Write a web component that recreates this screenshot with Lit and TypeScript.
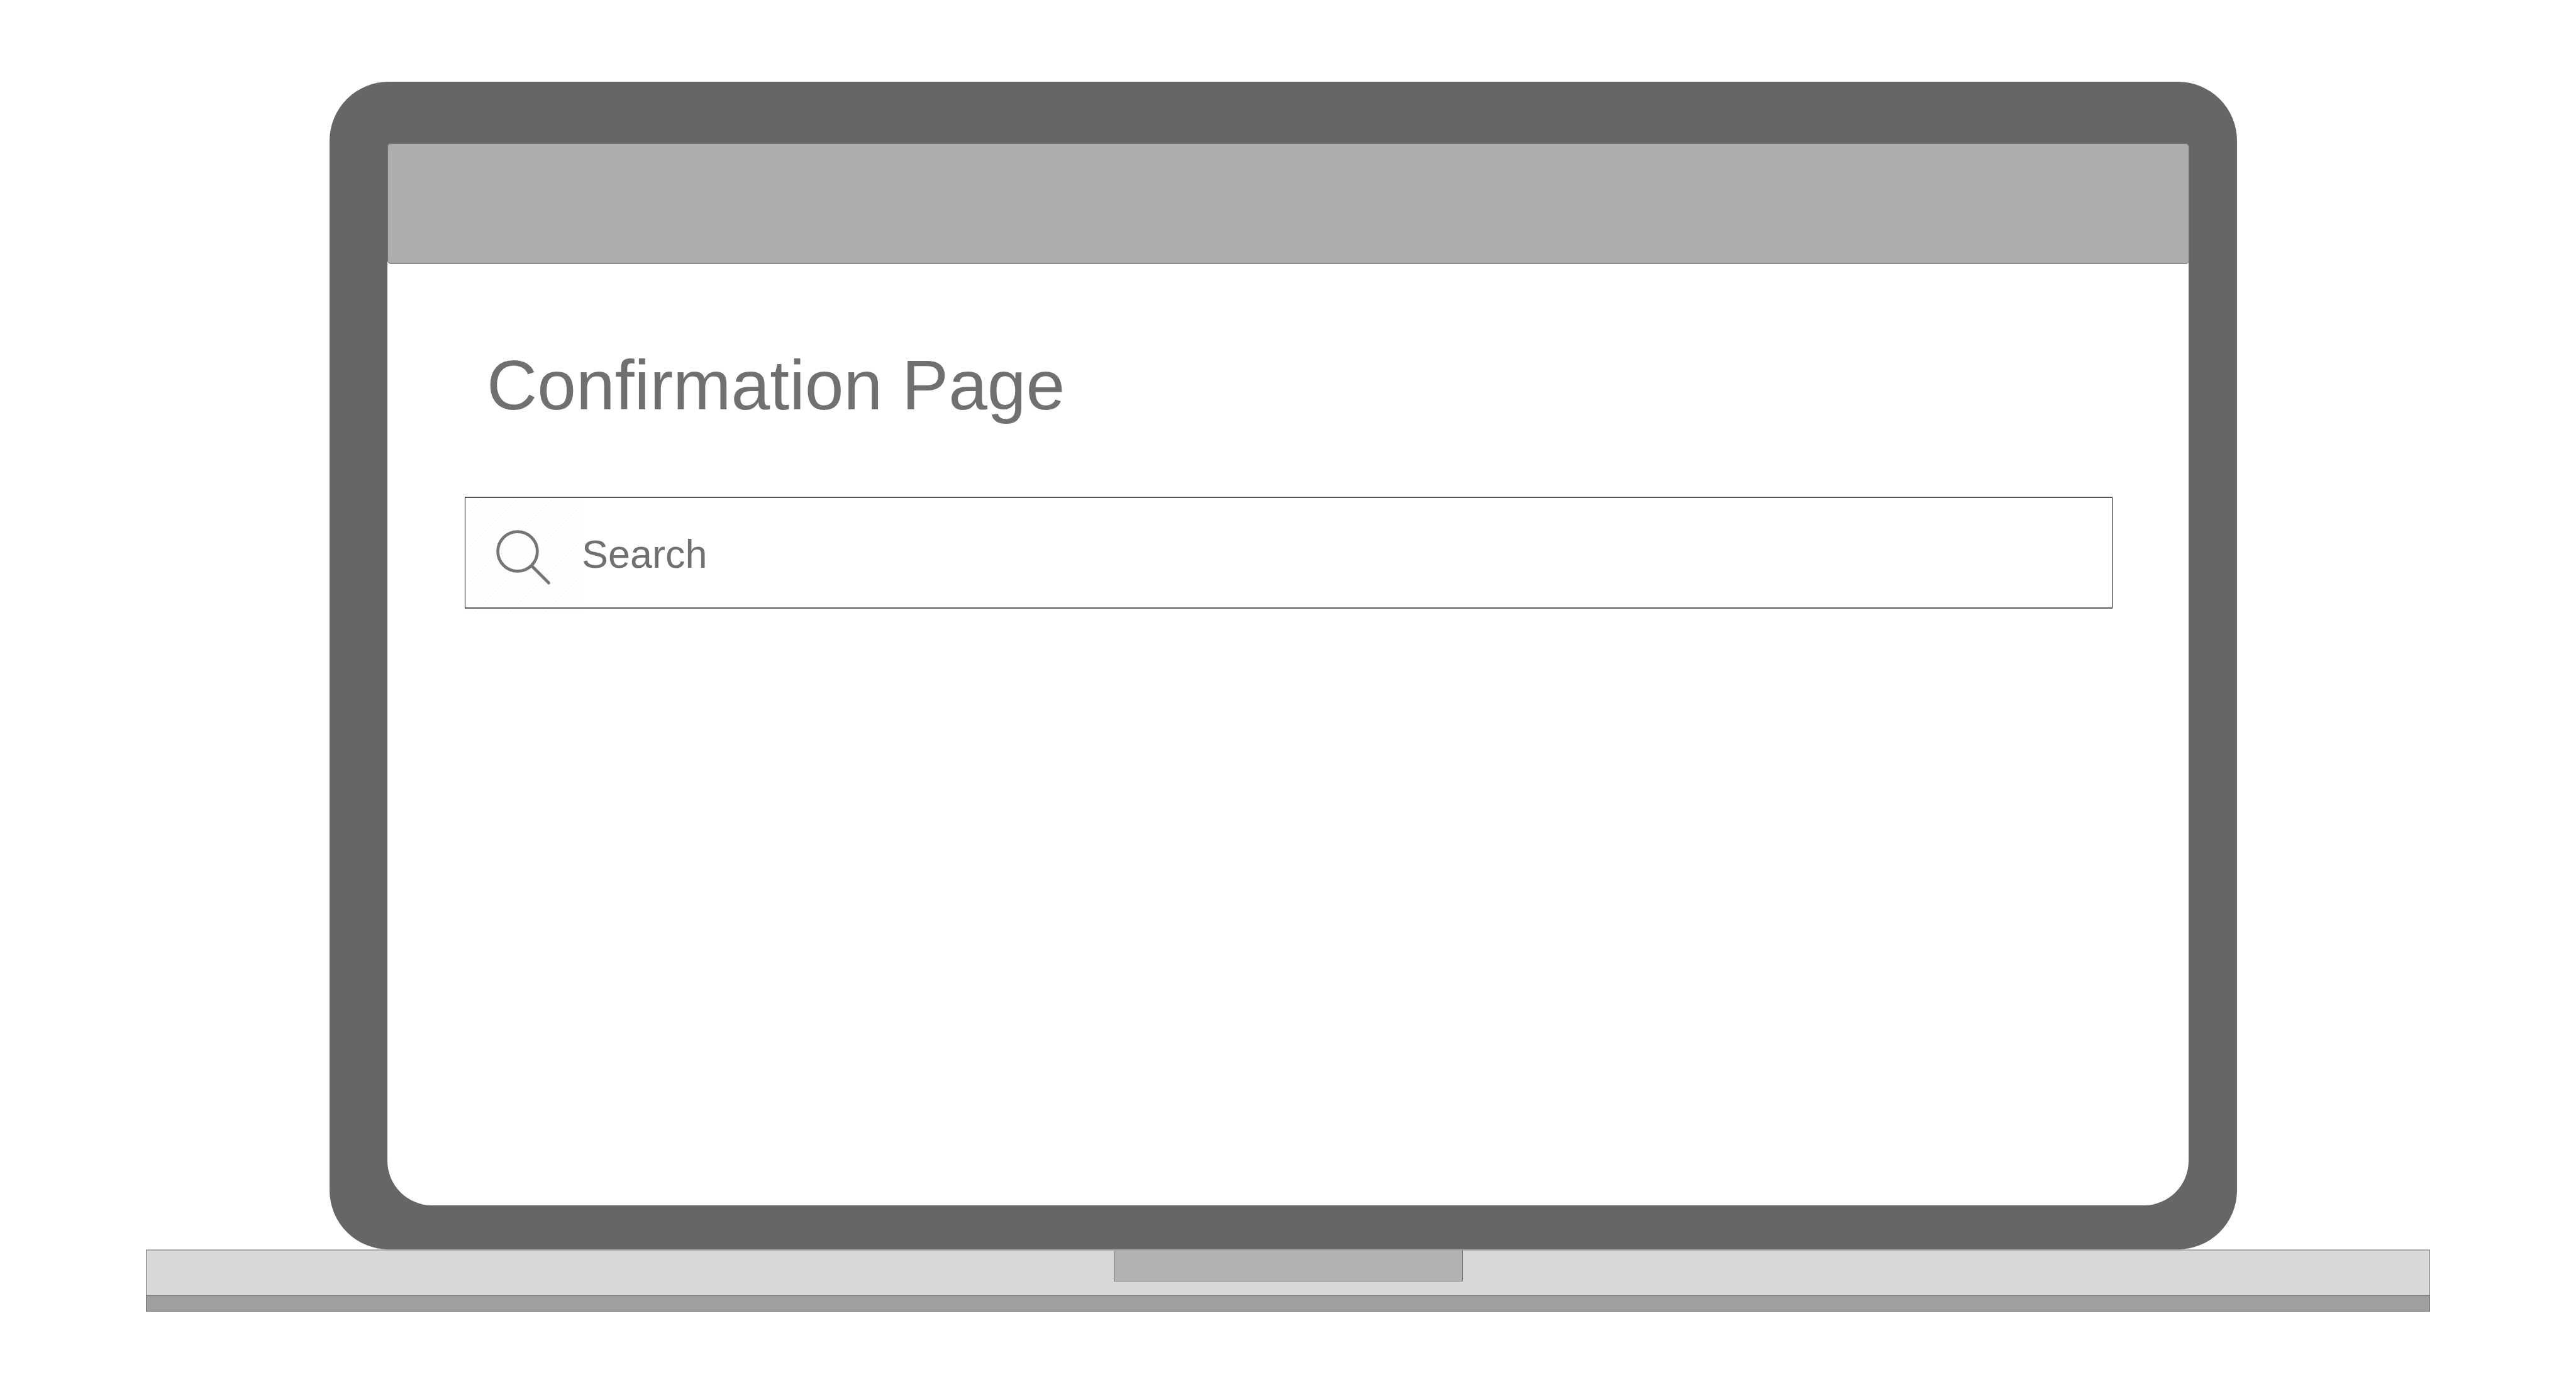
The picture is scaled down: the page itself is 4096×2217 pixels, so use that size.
import { LitElement, html, css } from "lit";
import { customElement } from "lit/decorators.js";

@customElement("search-field")
class SearchField extends LitElement {
  static styles = css`
    :host {
      display: block;
    }
    .field {
      display: flex;
      box-sizing: border-box;
      height: 178px;
      border: 1px solid #000;
      border-top: 2px solid #555;
      border-bottom: 2px solid #5c5c5c;
      background: #fff;
    }
    .icon {
      display: block;
      flex: none;
      width: 185px;
      height: 184px;
      mix-blend-mode: multiply;
    }
    .hatch {
      stroke: #f8f8f8;
      stroke-width: 1;
    }
    .glass {
      fill: none;
      stroke: #757575;
      stroke-width: 4.8;
      stroke-linecap: round;
    }
    .input {
      flex: 1;
      min-width: 0;
      height: 100%;
      padding: 4px 0 0;
      box-sizing: border-box;
      border: 0;
      outline: 0;
      background: none;
      font: 63px/80px "Liberation Sans", Arial, sans-serif;
      color: #707070;
    }
    .input::placeholder {
      color: #707070;
      opacity: 1;
    }
  `;

  render() {
    return html`
      <div class="field">
        <label for="query">
          <svg class="icon" viewBox="0 0 185 184" role="img" aria-label="Search">
            <defs>
              <pattern
                id="hatch"
                width="7"
                height="7"
                patternUnits="userSpaceOnUse"
              >
                <path class="hatch" d="M-1 8 8 -1M-1 1 1 -1M6 8 8 6" />
              </pattern>
            </defs>
            <rect x="1" width="183" height="184" fill="url(#hatch)" />
            <circle class="glass" cx="83" cy="85" r="31.4" />
            <path class="glass" d="M106 108.500L132.500 135" />
          </svg>
        </label>
        <input class="input" id="query" type="text" placeholder="Search" />
      </div>
    `;
  }
}

@customElement("app-root")
class AppRoot extends LitElement {
  static styles = css`
    :host {
      display: flex;
      flex-direction: column;
      box-sizing: border-box;
      min-height: 100vh;
      padding: 130px 232px 131px;
      background: #fff;
      font-family: "Liberation Sans", Arial, sans-serif;
    }
    .lid {
      flex: 1;
      display: flex;
      margin: 0 307px 0 292px;
      padding: 98px 77px 70px 92px;
      border-radius: 94px;
      background: #666;
    }
    .screen {
      flex: 1;
      border-radius: 6px 6px 71px 71px;
      background: #fff;
    }
    .bar {
      box-sizing: border-box;
      height: 192px;
      margin-right: -1px;
      border: 1px solid #707070;
      border-radius: 6px;
      background: #aeaeae;
    }
    .content {
      padding: 129px 121px 71px 123px;
    }
    .title {
      margin: 0 0 113px;
      padding-left: 35px;
      font-size: 111px;
      line-height: 128px;
      font-weight: 400;
      color: #707070;
    }
    .deck {
      display: flex;
      justify-content: center;
      box-sizing: border-box;
      height: 73px;
      border: 1px solid #747474;
      border-top: 2px solid #aaa;
      border-bottom: 0;
      background: #d8d8d8;
    }
    .notch {
      box-sizing: border-box;
      width: 555px;
      height: 49px;
      border: 1px solid #747474;
      border-top: 0;
      background: #b3b1b3;
    }
    .edge {
      box-sizing: border-box;
      height: 26px;
      border: 1px solid #6e6e6e;
      background: #a09e9f;
    }
  `;

  render() {
    return html`
      <div class="lid">
        <main class="screen">
          <div class="bar"></div>
          <div class="content">
            <h1 class="title">Confirmation Page</h1>
            <search-field></search-field>
          </div>
        </main>
      </div>
      <div class="deck"><div class="notch"></div></div>
      <div class="edge"></div>
    `;
  }
}
